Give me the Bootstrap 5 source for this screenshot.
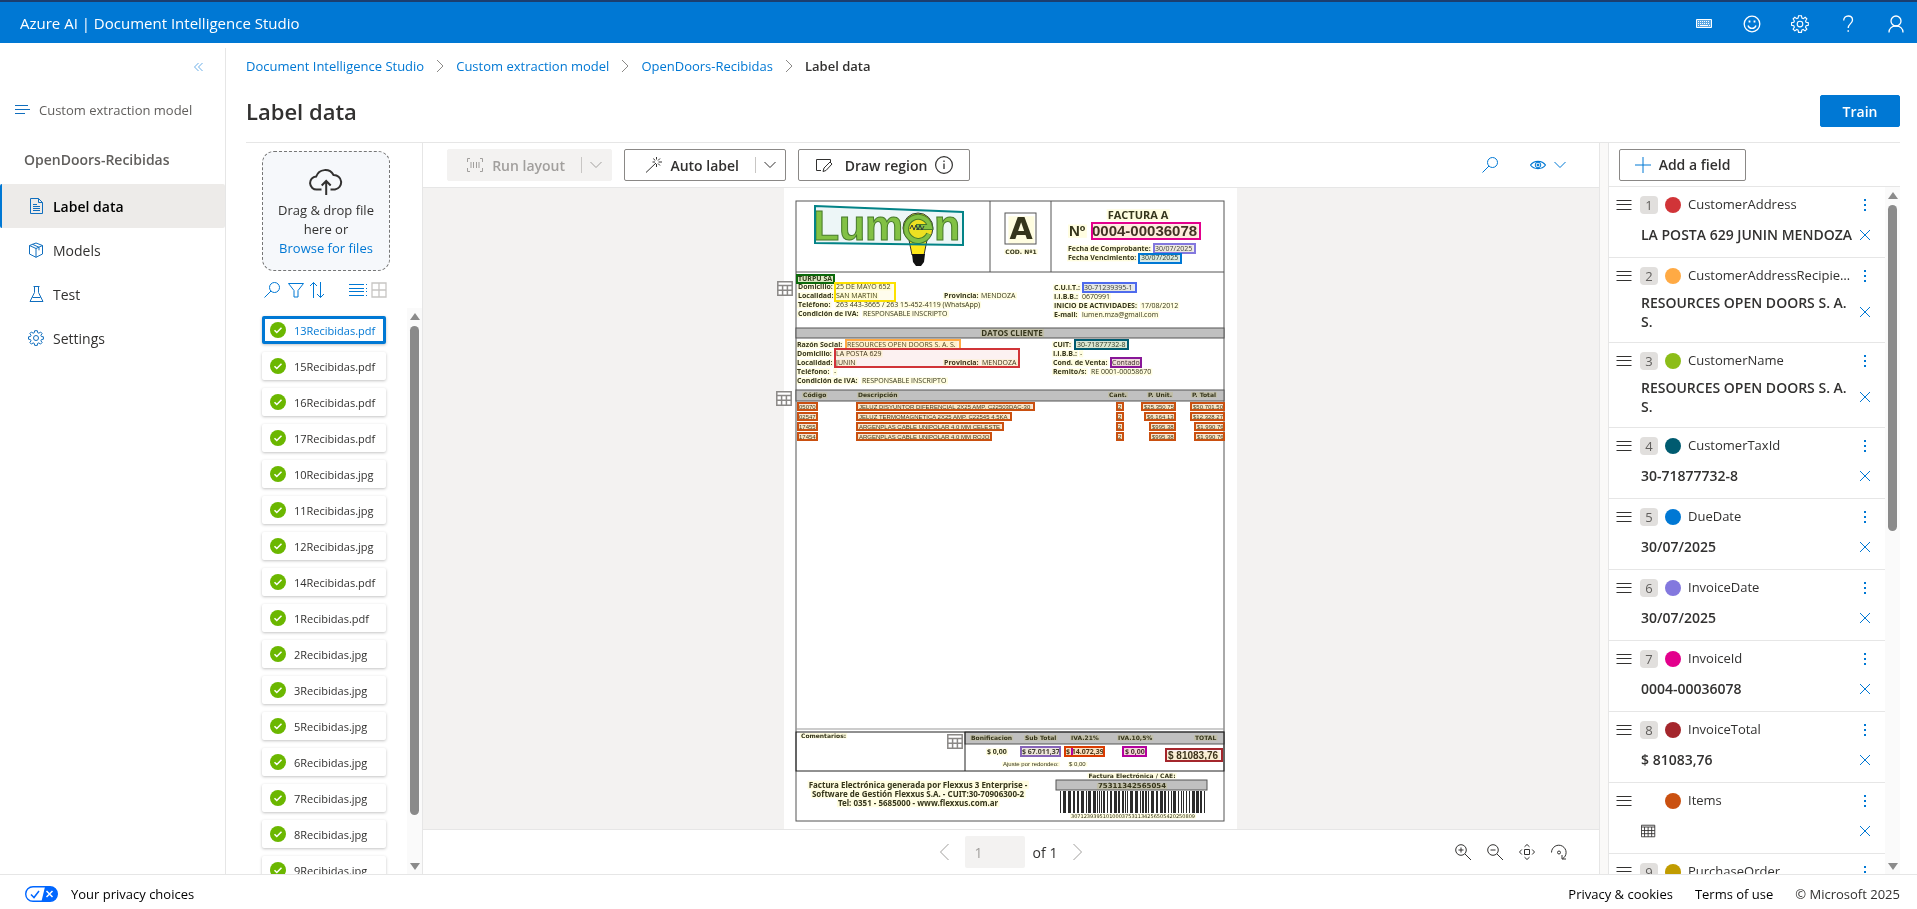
<!DOCTYPE html>
<html lang="en">
<head>
<meta charset="utf-8">
<meta name="viewport" content="width=device-width, initial-scale=1">
<title>Label data - Document Intelligence Studio</title>
<link href="https://cdn.jsdelivr.net/npm/bootstrap@5.3.0/dist/css/bootstrap.min.css" rel="stylesheet">
<style>
:root{--brand:#0078d4;--line:#e6e6e6;--ink:#323130}
body{font-family:"Open Sans","Noto Sans",sans-serif;font-size:13px;line-height:19px;color:var(--ink);background:#fff}
a{text-decoration:none;color:var(--brand)}
svg.ico{width:16px;height:16px;fill:none;stroke:currentColor;stroke-width:1;flex:none;display:block}
svg.i18{width:18px;height:18px}
svg.i12{width:12px;height:12px}
.semi{font-weight:600}
.topbar{height:43px;background:var(--brand);border-top:2px solid #1b3e6f;color:#fff;padding:2px 11px 0 20px}
.topbar .brandname{font-size:15px;color:#fff}
.icon-btn{background:none;border:0;padding:0;color:inherit;display:flex;align-items:center;justify-content:center}
.icon-btn.tint{color:var(--brand)}
.icon-btn.faint{color:#a19f9d}
.topbar .icon-btn{width:20px;height:20px}
.tools{gap:28px}
.side{width:226px;border-right:1px solid var(--line);margin-top:5px}
.side .collapse-row{height:37px;padding:0 20px;color:#6aaee8}
.side .model{padding:0 14px;height:50px;color:#605e5c;gap:9px}
.side .project{padding:0 24px;height:44px;margin:2px 0 3px;color:#605e5c;font-size:14px}
.side .item{height:44px;padding-left:28px;gap:9px;color:var(--ink);font-size:14px}
.side .item .ico{color:#106ebe}
.side .item.active{background:#edebe9;color:#000;border-left:2px solid var(--brand);padding-left:26px;border-radius:2px;font-weight:600}
.content{padding:0 17px 0 20px}
.crumbs{height:46px;gap:11px}
.crumbs .ico{width:10px;height:14px;color:#8a8886}
.pagehead{height:54px;border-bottom:1px solid var(--line);padding-top:6px}
.pagehead h1{font-size:22px;line-height:32px;font-weight:600;margin:0}
.btn-fl{height:32px;border:1px solid #8a8886;border-radius:2px;background:#fff;color:var(--ink);font-weight:600;font-size:14px;line-height:19px;padding:0 9px;display:flex;align-items:center;justify-content:flex-end}
.btn-train{width:80px;background:var(--brand);border-color:var(--brand);color:#fff;justify-content:center}
.btn-run{width:165px}
.btn-auto{width:162px}
.btn-draw{width:172px;justify-content:center}
.btn-add{width:127px;justify-content:center}
.files{width:177px;border-right:1px solid var(--line)}
.drop{width:128px;height:120px;margin:8px 0 0 16px;border:1px dashed #767676;border-radius:12px;background:#f6f8fb;text-align:center;padding-top:17px}
.drop svg{width:34px;height:26px;margin:0 auto 6px;stroke-width:2}
.filetools{margin:9px 0 9px 18px;width:123px;height:19px;color:var(--brand)}
.filelist{padding:8px 0 0 16px}
.file{width:124px;height:28px;margin-bottom:8px;padding:0 8px;gap:8px;border-radius:2px;border:0;background:#fff;font-size:11px;color:var(--ink);box-shadow:0 1px 3px rgba(0,0,0,.24)}
.file.sel{border:3px solid var(--brand);padding:0 5px;color:var(--brand)}
.file svg{width:16px;height:16px;flex:none}
.sbar{width:15px;background:#fafafa;padding:5px 3px 4px}
.sbar i{display:block;width:0;height:0;border:5px solid transparent;border-top:0;border-bottom:7px solid #8a8a8a}
.sbar i.dn{border-top:7px solid #8a8a8a;border-bottom:0}
.sbar b{display:block;width:9px;background:#8a8a8a;border-radius:5px}
.thumb-files{margin:6px 0 48px}
.thumb-fields{margin-top:6px;height:326px}
.bar{height:45px;border-bottom:1px solid var(--line);padding:0 33px 0 24px;gap:12px}
.dim{background:#f3f2f1;border-color:#f3f2f1;color:#a19f9d}
.btn-fl .sep{width:1px;height:16px;background:#c8c6c4}
.stage{background:#f3f2f1;padding-right:2px}
.sheet{width:453px;background:#fff;overflow:visible;display:block}
.foot{height:45px;border-top:1px solid var(--line)}
.pager{gap:12px}
.foot input{width:60px;height:32px;border:0;border-radius:2px;background:#f3f2f1;color:#a19f9d;padding:0 10px;font-size:14px}
.foot label{font-size:14px}
.viewtools{gap:16px;padding-right:32px}
.split{width:10px;background:#faf9f8;border:solid var(--line);border-width:0 1px}
.fields{width:291px}
.addbar{height:44px;border-bottom:1px solid var(--line);padding-left:10px}
.fieldrow{border-bottom:1px solid var(--line);padding:8px 12px 0 7px;height:71px}
.fieldrow.tall{height:85px}
.fieldrow .num{width:18px;height:18px;border-radius:4px;background:#e1dfdd;color:#605e5c;line-height:18px;text-align:center}
.fieldrow .num.blank{background:none}
.fieldrow .dot{width:16px;height:16px;border-radius:50%;margin:0 7px 0 3px}
.fieldrow .val{height:41px;padding-left:25px}
.fieldrow.tall .val{height:53px}
.fieldrow .txt{font-weight:600;font-size:14px;width:216px}
.fieldrow .name{width:164px}
.fieldrow .icon-btn{width:16px}
.legal{height:35px;border-top:1px solid var(--line);padding:4px 17px 0 25px}
.legal a{color:#000}
.legal .choices{gap:13px}
.links{gap:22px}
.f-lab{font:bold 7px "Open Sans",sans-serif}
.f-val{font:7px "Open Sans",sans-serif}
.f-wide{font:bold 6px "DejaVu Sans",sans-serif}
.f-row{font:6px "Liberation Sans",sans-serif}
.sheet text{fill:#35351c}
.sheet .hl{fill:#fffde0;mix-blend-mode:multiply}
.sheet .logo{fill:#8cc63f;stroke:#4c7a22;stroke-width:1;font:bold 43px "Liberation Sans",sans-serif}
</style>
</head>
<body class="d-flex flex-column vh-100 overflow-hidden">
<svg class="d-none" xmlns="http://www.w3.org/2000/svg">
  <symbol id="search" viewBox="0 0 16 16"><circle cx="10.5" cy="5.5" r="5"/><path d="M7 9L.5 15.500"/></symbol>
  <symbol id="chev" viewBox="0 0 12 12"><path d="M.5 3L6 8.500 11.500 3"/></symbol>
  <symbol id="right" viewBox="0 0 10 14"><path d="M2 1l6 6-6 6"/></symbol>
  <symbol id="gear" viewBox="0 0 16 16"><circle cx="8" cy="8" r="2.500"/><path d="M6.700 .7h2.600l.4 2 1.200.5L12.600 2l1.500 1.500-1.200 1.800.5 1.200 2 .3v2.400l-2 .4-.5 1.200 1.200 1.700-1.600 1.600-1.700-1.200-1.200.5-.3 2H6.700l-.4-2-1.200-.5-1.700 1.200-1.500-1.600L3 10.800l-.5-1.200-2-.4V6.800l2-.3L3 5.300 1.900 3.500 3.400 2l1.700 1.200 1.200-.5z"/></symbol>
  <symbol id="x" viewBox="0 0 12 12"><path d="M1 1l10 10M11 1L1 11"/></symbol>
  <symbol id="burger" viewBox="0 0 16 16"><path d="M.5 3.500h15M.5 7.500h15M.5 12.500h15"/></symbol>
  <symbol id="dots" viewBox="0 0 4 14"><path d="M2 1v2M2 6v2M2 11v2" stroke-width="2"/></symbol>
  <symbol id="grid" viewBox="0 0 16 15"><path fill="#fff" d="M.8.8h14.400v13.400H.8z"/><path d="M.8 4.500h14.400M.8 9.300h14.400M5.600 4.500v9.700M10.400 4.500v9.700"/></symbol>
  <symbol id="ok" viewBox="0 0 16 16"><circle cx="8" cy="8" r="8" fill="#6bb700"/><path d="M4.500 8.200l2.300 2.300 4.700-4.700" fill="none" stroke="#fff" stroke-width="1.500"/></symbol>
</svg>

<header class="topbar d-flex align-items-center justify-content-between flex-shrink-0">
  <a class="brandname" href="#">Azure AI | Document Intelligence Studio</a>
  <div class="tools d-flex align-items-center">
    <button class="icon-btn" aria-label="Keyboard shortcuts"><svg class="ico" viewBox="0 0 16 16"><path d="M.5 3.500h15v8H.5z" fill="#fff" fill-opacity=".35"/><path d="M2 5.500h12M2 7.500h12" stroke-dasharray="1 1"/><path d="M2 9.500h1m1 0h8m1 0h1"/></svg></button>
    <button class="icon-btn" aria-label="Feedback"><svg class="ico i18" viewBox="0 0 18 18"><circle cx="9" cy="9" r="7.800" stroke-width="1.300"/><path d="M5 10.500a4.200 4.200 0 0 0 8 0" stroke-width="1.300"/><path d="M6.500 5.500v2M11.500 5.500v2" stroke-width="1.800"/></svg></button>
    <button class="icon-btn" aria-label="Settings"><svg class="ico i18"><use href="#gear"/></svg></button>
    <button class="icon-btn" aria-label="Help"><svg class="ico i18" viewBox="0 0 18 18"><path d="M4.700 5.500C4.700 3 6.500 1 9.200 1s4.300 1.800 4.300 4c0 3.500-4.300 3.800-4.300 8" stroke-width="1.300"/><path d="M9.200 15.200v1.500" stroke-width="1.500"/></svg></button>
    <button class="icon-btn" aria-label="Account"><svg class="ico i18" viewBox="0 0 18 18"><circle cx="9" cy="6" r="5" stroke-width="1.300"/><path d="M2 17.500c0-4 3-6.500 7-6.500s7 2.500 7 6.500" stroke-width="1.300"/></svg></button>
  </div>
</header>

<div class="d-flex flex-grow-1 overflow-hidden">
  <nav class="side flex-shrink-0">
    <div class="collapse-row d-flex align-items-center justify-content-end"><button class="icon-btn" aria-label="Collapse menu"><svg class="ico i12" viewBox="0 0 12 12"><path d="M5.500 2l-4 4 4 4M9.500 2l-4 4 4 4"/></svg></button></div>
    <div class="model d-flex align-items-center"><svg class="ico" viewBox="0 0 16 16"><path stroke="#106ebe" d="M1 3.500h13M1 7.500h15M1 11.500h10"/></svg>Custom extraction model</div>
    <div class="project semi d-flex align-items-center">OpenDoors-Recibidas</div>
    <a class="item active d-flex align-items-center" href="#"><svg class="ico" viewBox="0 0 16 16"><path d="M2.500.5h8l4 4v11h-12zM10.500.5v4h4M5 6.500h4M5 8.500h7M5 10.500h7M5 12.500h7"/></svg>Label data</a>
    <a class="item d-flex align-items-center" href="#"><svg class="ico" viewBox="0 0 16 16"><path d="M8 1l6.500 2.500v8.500L8 15.300 1.500 12V3.500zM1.500 3.500L8 6.500l6.500-3M8 6.500v8.800M4.500 2.300l6.500 3v3"/></svg>Models</a>
    <a class="item d-flex align-items-center" href="#"><svg class="ico" viewBox="0 0 16 16"><path d="M5.500.5h6M6.500.5v6l-4.500 9h13l-4.500-9v-6M4.500 11.500h8"/></svg>Test</a>
    <a class="item d-flex align-items-center" href="#"><svg class="ico"><use href="#gear"/></svg>Settings</a>
  </nav>

  <main class="content d-flex flex-column flex-grow-1 overflow-hidden">
    <nav class="crumbs d-flex align-items-center flex-shrink-0" aria-label="breadcrumb">
      <a href="#">Document Intelligence Studio</a><svg class="ico"><use href="#right"/></svg>
      <a href="#">Custom extraction model</a><svg class="ico"><use href="#right"/></svg>
      <a href="#">OpenDoors-Recibidas</a><svg class="ico"><use href="#right"/></svg>
      <span class="semi">Label data</span>
    </nav>
    <div class="pagehead d-flex justify-content-between flex-shrink-0 align-items-start">
      <h1>Label data</h1>
      <button class="btn-fl btn-train">Train</button>
    </div>

    <div class="d-flex flex-grow-1 overflow-hidden">
      <section class="files flex-shrink-0 d-flex flex-column">
        <div class="drop flex-shrink-0">
          <svg class="ico" viewBox="0 0 34 26"><path d="M12.500 20.500H8a6.500 6.500 0 0 1-.8-13A9.500 9.500 0 0 1 24.500 6a7.300 7.300 0 0 1 1.500 14.500h-4.500M17.200 26V12.500M12.700 16.500l4.500-4.500 4.500 4.500"/></svg>
          Drag &amp; drop file<br>here or<br><a href="#">Browse for files</a>
        </div>
        <div class="filetools d-flex align-items-center flex-shrink-0">
          <button class="icon-btn" aria-label="Search files"><svg class="ico"><use href="#search"/></svg></button>
          <button class="icon-btn ms-2" aria-label="Filter"><svg class="ico" viewBox="0 0 16 16"><path d="M.5 1.500h15l-5.500 7v6.500H6V8.500z"/></svg></button>
          <button class="icon-btn ms-1" aria-label="Sort"><svg class="ico i18" viewBox="0 0 18 18"><path d="M5.500 17V1.500M2 5l3.500-3.500L9 5M12.500 1v15.500M9 13l3.500 3.500L16 13"/></svg></button>
          <button class="icon-btn ms-auto" aria-label="List view"><svg class="ico i18" viewBox="0 0 18 16"><path d="M0 2.500h15M0 6.500h15M0 9.500h15M0 13.500h15M17 2.500h1M17 6.500h1M17 9.500h1M17 13.500h1"/></svg></button>
          <button class="icon-btn ms-1" aria-label="Grid view"><svg class="ico" viewBox="0 0 16 16"><path stroke="#c8c6c4" d="M1 1h14v14H1zM8 1v14M1 8h14" stroke-width="1.300"/></svg></button>
        </div>
        <div class="d-flex flex-grow-1 overflow-hidden justify-content-between">
          <div class="filelist" id="files"></div>
          <div class="sbar d-flex flex-column"><i></i><b class="flex-grow-1 thumb-files"></b><i class="dn"></i></div>
        </div>
      </section>

      <section class="d-flex flex-column flex-grow-1 overflow-hidden">
        <div class="bar d-flex align-items-center flex-shrink-0">
          <button class="btn-fl btn-run dim" disabled><svg class="ico i18 me-2" viewBox="0 0 18 16"><path d="M4 1.500H1.500V5M14 1.500h2.500V5M4 14.500H1.500V11M14 14.500h2.500V11M5 5v6M7.500 5v6M10.500 5v6M13 5v6"/></svg>Run layout<span class="sep ms-3 me-2"></span><svg class="ico i12"><use href="#chev"/></svg></button>
          <button class="btn-fl btn-auto"><svg class="ico me-2" viewBox="0 0 16 16"><path d="M0 15.500L10 6M10.500 0v2.500M10.500 7v3M6.500 5h2.500M12.500 5H16M7.500 1.500l1.500 2M14 1.500l-2 2M14 8.500l-2-2"/></svg>Auto label<span class="sep ms-3 me-2"></span><svg class="ico i12"><use href="#chev"/></svg></button>
          <button class="btn-fl btn-draw"><svg class="ico i18 me-2" viewBox="0 0 18 16"><path d="M6 13.500H1.500v-11h14V6M8 14.500l1-3.500 6-6 2 2-6 6.500z"/></svg><span class="ms-1">Draw region</span><svg class="ico i18 ms-2" viewBox="0 0 18 18"><circle cx="9" cy="9" r="8.400" stroke-width="1.200"/><path d="M9 7.500V13M9 4.500V6" stroke-width="1.300"/></svg></button>
          <button class="icon-btn ms-auto me-3 tint" aria-label="Search document"><svg class="ico"><use href="#search"/></svg></button>
          <button class="icon-btn gap-2 ms-1 tint" aria-label="View options"><svg class="ico" viewBox="0 0 16 16"><path d="M.5 8c3.500-4.800 11.500-4.800 15 0-3.500 4.800-11.500 4.800-15 0z" stroke-width="1.200"/><circle cx="8" cy="8" r="2.800"/><circle cx="8" cy="8" r="1" fill="currentColor"/></svg><svg class="ico i12"><use href="#chev"/></svg></button>
        </div>
        <div class="stage flex-grow-1 d-flex justify-content-center overflow-hidden">
          <svg class="sheet" id="sheet" viewBox="784 188 453 641" role="img" aria-label="Factura A 0004-00036078"></svg>
        </div>
        <div class="foot row g-0 align-items-center flex-shrink-0">
          <div class="col-4"></div>
          <div class="pager col-4 d-flex align-items-center justify-content-center">
            <button class="icon-btn faint" aria-label="Previous page"><svg class="ico" viewBox="0 0 16 16"><path d="M11.500 0l-8 8 8 8"/></svg></button>
            <div class="d-flex align-items-center gap-2"><input id="pageno" aria-label="Page number" value="1" disabled><label for="pageno">of 1</label></div>
            <button class="icon-btn faint" aria-label="Next page"><svg class="ico" viewBox="0 0 16 16"><path d="M4.500 0l8 8-8 8"/></svg></button>
          </div>
          <div class="viewtools col-4 d-flex justify-content-end">
            <button class="icon-btn" aria-label="Zoom in"><svg class="ico" viewBox="0 0 16 16"><circle cx="6" cy="6" r="5.300"/><path d="M10 10l6 6M3.500 6h5M6 3.500v5"/></svg></button>
            <button class="icon-btn" aria-label="Zoom out"><svg class="ico" viewBox="0 0 16 16"><circle cx="6" cy="6" r="5.300"/><path d="M10 10l6 6M3.500 6h5"/></svg></button>
            <button class="icon-btn" aria-label="Fit to page"><svg class="ico" viewBox="0 0 16 16"><path d="M5.500 5.500h5v5h-5zM5.500 2.800L8 .5l2.500 2.300M5.500 13.200L8 15.500l2.500-2.300M2.800 5.500L.5 8l2.300 2.500M13.200 5.500L15.500 8l-2.300 2.500"/></svg></button>
            <button class="icon-btn" aria-label="Rotate"><svg class="ico" viewBox="0 0 16 16"><path d="M.5 8.500a7.300 7.300 0 1 1 11 6.300M11 11v4h4"/><circle cx="8" cy="8.500" r="1.500"/></svg></button>
          </div>
        </div>
      </section>

      <div class="split flex-shrink-0"></div>

      <section class="fields flex-shrink-0 d-flex flex-column">
        <div class="addbar d-flex align-items-center flex-shrink-0"><button class="btn-fl btn-add"><svg class="ico me-2" viewBox="0 0 16 16"><path stroke="#0078d4" d="M8 0v16M0 8h16"/></svg>Add a field</button></div>
        <div class="d-flex flex-grow-1 overflow-hidden">
          <div class="flex-grow-1" id="fields"></div>
          <div class="sbar d-flex flex-column"><i></i><b class="thumb-fields"></b><i class="dn mt-auto"></i></div>
        </div>
      </section>
    </div>
  </main>
</div>

<footer class="legal d-flex align-items-center justify-content-between flex-shrink-0">
  <a href="#" class="choices d-flex align-items-center"><svg width="33" height="16" viewBox="0 0 33 16"><rect x=".7" y=".7" width="31.600" height="14.600" rx="7.300" fill="#fff" stroke="#06f" stroke-width="1.400"/><path d="M20 .7h5a7.300 7.300 0 0 1 0 14.600h-8.500z" fill="#06f"/><path d="M6 8.500l3 3 5-6.500" fill="none" stroke="#06f" stroke-width="1.500"/><path d="M21.500 5l6 6M27.500 5l-6 6" stroke="#fff" stroke-width="1.500"/></svg>Your privacy choices</a>
  <div class="links d-flex"><a href="#">Privacy &amp; cookies</a><a href="#">Terms of use</a><span>© Microsoft 2025</span></div>
</footer>

<script src="https://cdn.jsdelivr.net/npm/bootstrap@5.3.0/dist/js/bootstrap.bundle.min.js"></script>
<script>
const files = ["13Recibidas.pdf","15Recibidas.pdf","16Recibidas.pdf","17Recibidas.pdf","10Recibidas.jpg","11Recibidas.jpg","12Recibidas.jpg","14Recibidas.pdf","1Recibidas.pdf","2Recibidas.jpg","3Recibidas.jpg","5Recibidas.jpg","6Recibidas.jpg","7Recibidas.jpg","8Recibidas.jpg","9Recibidas.jpg"];
document.getElementById("files").innerHTML = files.map((f, i) =>
  `<button class="file d-flex align-items-center ${i ? "" : "sel"}"><svg><use href="#ok"/></svg><span>${f}</span></button>`).join("");

const fields = [
  ["1","#d13438","CustomerAddress","LA POSTA 629 JUNIN MENDOZA"],
  ["2","#ffaa44","CustomerAddressRecipient","RESOURCES OPEN DOORS S. A. S."],
  ["3","#8cbd18","CustomerName","RESOURCES OPEN DOORS S. A. S."],
  ["4","#005b70","CustomerTaxId","30-71877732-8"],
  ["5","#0078d4","DueDate","30/07/2025"],
  ["6","#8378de","InvoiceDate","30/07/2025"],
  ["7","#e3008c","InvoiceId","0004-00036078"],
  ["8","#a4262c","InvoiceTotal","$ 81083,76"],
  ["","#ca5010","Items",""],
  ["9","#c19c00","PurchaseOrder",""]];
document.getElementById("fields").innerHTML = fields.map(([n, c, name, v]) => `
  <div class="fieldrow ${v.startsWith("RES") ? "tall" : ""}">
    <div class="d-flex align-items-center">
      <svg class="ico"><use href="#burger"/></svg>
      <span class="num ms-2 me-1 ${n ? "" : "blank"}">${n}</span>
      <span class="dot" style="background:${c}"></span>
      <span class="name text-truncate">${name}</span>
      <button class="icon-btn ms-auto tint" aria-label="More actions"><svg class="ico" viewBox="0 0 16 16"><use href="#dots" x="6" y="1" width="4" height="14"/></svg></button>
    </div>
    <div class="val d-flex align-items-center justify-content-between">
      ${v ? `<span class="txt">${v}</span>` : '<svg class="ico" viewBox="0 0 18 18"><path d="M.5 2.500h15v13H.5zM.5 4.500h15M.5 8.500h15M.5 12h15M4 4.500v11M8 4.500v11M12 4.500v11"/></svg>'}
      <button class="icon-btn tint" aria-label="Remove value"><svg class="ico i12"><use href="#x"/></svg></button>
    </div>
  </div>`).join("");

/* Scanned invoice: rules and fills, then words, then the labelled regions */
const line = (x1, y1, x2, y2, c = "#555") => `<path d="M${x1} ${y1}L${x2} ${y2}" stroke="${c}"/>`;
const box = (x, y, w, h, f = "none", s = "#555") => `<rect x="${x}" y="${y}" width="${w}" height="${h}" fill="${f}" stroke="${s}"/>`;
let base = box(796,201,428,620) + line(796,272,1224,272) + line(990,201,990,272) + line(1051,201,1051,272)
  + box(1005,213,31,31) + box(796,328,428,10,"#c0c0c0") + box(796,390,428,11,"#c0c0c0")
  + line(796,729,1224,729,"#999") + box(965,732,259,12,"#c0c0c0") + box(796,732,428,39,"none","#222") + line(965,732,965,771,"#222")
  + box(1056,780,151,10,"#c0c0c0");
let seed = 7;
for (let x = 1060; x < 1205;) {
  seed = (seed * 73 + 41) % 1009;
  const w = 1 + seed % 3, gap = 1 + (seed >> 3) % 2;
  base += `<rect x="${x}" y="791" width="${w}" height="22" fill="#2b2b2b"/>`;
  x += w + gap;
}
base += `<path d="M909 240l3 15h12l3-15z" fill="#ffe81a" stroke="#333"/><path d="M912 254h13l-1 8-3 4h-5l-3-4z" fill="#111"/>
  <text class="logo" x="813" y="240">L</text><text class="logo" x="839" y="240">u</text><text class="logo" x="865" y="240">m</text><text class="logo" x="934" y="240">n</text>
  <circle cx="918" cy="228" r="15" fill="#ffe81a" stroke="#333"/><path d="M929 234a12 12 0 1 1 1-7h-14" fill="none" stroke="#4c7a22" stroke-width="6"/><path d="M929 234a12 12 0 1 1 1-7h-14" fill="none" stroke="#8cc63f" stroke-width="4"/><path d="M910 229l2-4 2 5 2-5 2 5 2-5 2 5 2-4" fill="none" stroke="#333"/>`;

const L = "f-lab", V = "f-val", W = "f-wide", R = "f-row";
const words = [
 [1006,239,"A","","font:bold 30px 'DejaVu Sans'",1021],[1006,254,"COD. Nº1",W,"",1021],
 [0,219,"FACTURA A","","font:bold 11px 'Open Sans'",1138],[1069,236,"Nº","","font:bold 15px 'Liberation Sans'"],[1092,236,"0004-00036078","","font:bold 15px 'Liberation Sans'"],
 [1068,251,"Fecha de Comprobante:",L],[1155,251,"30/07/2025",V],[1068,260,"Fecha Vencimiento:",L],[1141,260,"30/07/2025",V],
 [798,281,"TURPU SA",L],[798,289,"Domicilio:",L],[836,289,"25 DE MAYO 652",V],[798,298,"Localidad:",L],[836,298,"SAN MARTIN",V],
 [944,298,"Provincia:",L],[981,298,"MENDOZA",V],[798,307,"Teléfono:",L],[836,307,"263 443-3665 / 263 15-452-4119 (WhatsApp)",V],
 [798,316,"Condición de IVA:",L],[863,316,"RESPONSABLE INSCRIPTO",V],
 [1054,290,"C.U.I.T.:",L],[1084,290,"30-71239395-1",V],[1054,299,"I.I.B.B.:",L],[1082,299,"0670991",V],
 [1054,308,"INICIO DE ACTIVIDADES:",L],[1141,308,"17/08/2012",V],[1054,317,"E-mail:",L],[1082,317,"lumen.mza@gmail.com",V],
 [0,336,"DATOS CLIENTE","","font:bold 8px 'Open Sans'",1012],
 [797,347,"Razón Social:",L],[847,347,"RESOURCES OPEN DOORS S. A. S.",V],[797,356,"Domicilio:",L],[836,356,"LA POSTA 629",V],
 [797,365,"Localidad:",L],[836,365,"JUNIN",V],[944,365,"Provincia:",L],[982,365,"MENDOZA",V],[797,374,"Teléfono:",L],[834,374,"-",V],
 [797,383,"Condición de IVA:",L],[862,383,"RESPONSABLE INSCRIPTO",V],
 [1053,347,"CUIT:",L],[1077,347,"30-71877732-8",V],[1053,356,"I.I.B.B.:",L],[1080,356,"-",V],[1053,365,"Cond. de Venta:",L],[1112,365,"Contado",V],
 [1053,374,"Remito/s:",L],[1091,374,"RE 0001-00058670",V],
 [803,397,"Código",W],[858,397,"Descripción",W],[1109,397,"Cant.",W],[1148,397,"P. Unit.",W],[1192,397,"P. Total",W],
 [801,738,"Comentarios:",W],[971,740,"Bonificacion",W],[1025,740,"Sub Total",W],[1071,740,"IVA.21%",W],[1118,740,"IVA.10,5%",W],[1195,740,"TOTAL",W],
 [987,754,"$ 0,00",L],[1022,754,"$ 67.011,37",L],[1066,754,"$ 14.072,39",L],[1125,754,"$ 0,00",L],
 [1168,759,"$ 81083,76","","font:bold 10px 'Liberation Sans'"],[1003,766,"Ajuste por redondeo:",R],[1069,766,"$ 0,00",R],
 [0,778,"Factura Electrónica / CAE:",W,"",1132],[0,788,"75311342565054","","font:bold 7px 'DejaVu Sans'",1132],
 [0,788,"Factura Electrónica generada por Flexxus 3 Enterprise -","","font:bold 8px 'Noto Sans'",918],
 [0,797,"Software de Gestión Flexxus S.A. - CUIT:30-70906300-2","","font:bold 8px 'Noto Sans'",918],
 [0,806,"Tel: 0351 - 5685000 - www.flexxus.com.ar","","font:bold 8px 'Noto Sans'",918],
 [0,818,"307123939510100037531134256505420250809","","font:5px 'DejaVu Sans'",1133]];
const regions = [
 [1092,223,108,16,"#e3008c"],[1154,244,41,9,"#8378de"],[1139,254,42,9,"#0078d4"],[797,275,37,8,"#0b6a0b"],[835,283,60,18,"#fce100"],
 [1083,283,53,9,"#4f6bed"],[846,340,114,9,"#ffaa44"],[835,349,184,18,"#d13438"],[1075,340,53,9,"#005b70"],[1111,358,30,9,"#881798"],
 [1021,747,39,9,"#8764b8"],[1065,747,39,9,"#da3b01"],[1123,747,23,9,"#b4009e"],[1166,749,56,12,"#a4262c"]];
[["05070","JELUZ DISYUNTOR DIFERENCIAL 2X25 AMP. C22503DAC-30",177,"2","$25.350,75","$50.701,50",33],
 ["02547","JELUZ TERMOMAGNETICA 2X25 AMP. C22545 4.5KA",154,"2","$6.164,13","$12.328,27",30],
 ["17455","ARGENPLAS CABLE UNIPOLAR 4.0 MM CELESTE",146,"2","$995,38","$1.990,76",25],
 ["17454","ARGENPLAS CABLE UNIPOLAR 4.0 MM ROJO",134,"2","$995,38","$1.990,76",25]].forEach(([a,b,bw,q,u,t,uw], i) => {
  const y = 403 + i * 10, c = "#ca5010", tw = i < 2 ? 33 : 29;
  regions.push([798,y,19,7,c],[857,y,bw,7,c],[1117,y,6,7,c],[1175-uw,y,uw,7,c],[1224-tw,y,tw,7,c]);
  words.push([799,y+6,a,R],[859,y+6,b,R],[1118,y+6,q,R],[1177-uw,y+6,u,R],[1226-tw,y+6,t,R]);
});
const sheet = document.getElementById("sheet");
sheet.innerHTML = base + '<g id="marks"></g><g id="words">' + words.map(([x,y,t,c,s = "",mid]) =>
  `<text x="${mid || x}" y="${y}" class="${c}" ${s ? `style="${s},sans-serif"` : ""} ${mid ? 'text-anchor="middle"' : ""}>${t}</text>`).join("") + "</g>"
  + regions.map(([x,y,w,h,c]) => `<rect x="${x}" y="${y}" width="${w}" height="${h}" fill="${c}" fill-opacity="${h < 10 ? .15 : .07}" stroke="${c}" stroke-width="2"/>`).join("")
  + '<path d="M1072 748v7" stroke="#b4009e" stroke-width="2"/>'
  + '<path d="M815 206l148 6v33l-148-2z" fill="#038387" fill-opacity=".07" stroke="#038387" stroke-width="2"/>'
  + [[777,281],[776,391],[947,734]].map(([x,y]) => `<use href="#grid" x="${x}" y="${y}" width="16" height="15" stroke="#8a8886" stroke-width="1.500"/>`).join("");
document.getElementById("marks").innerHTML = [...sheet.querySelectorAll("#words text")].map(t => {
  const b = t.getBBox();
  return `<rect class="hl" x="${b.x - 1}" y="${b.y + b.height * .15}" width="${b.width + 2}" height="${b.height * .78}"/>`;
}).join("");
</script>
</body>
</html>
